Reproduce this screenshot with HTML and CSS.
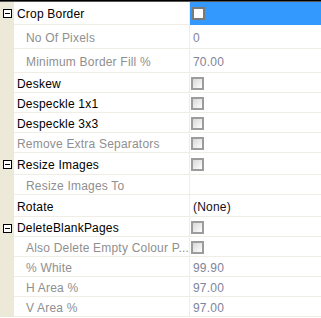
FILE: index.html
```html
<!DOCTYPE html>
<html>
<head>
<meta charset="utf-8">
<link rel="stylesheet" href="styles.css">
</head>
<body>
<div class="grid">
  <div class="row h23"><div class="gut"><span class="exp"></span></div><div class="name">Crop Border</div><div class="val selected"><span class="cb cb-sel"></span></div></div>
  <div class="row h24"><div class="gut"></div><div class="name child dim">No Of Pixels</div><div class="val num">0</div></div>
  <div class="row h24"><div class="gut"></div><div class="name child dim">Minimum Border Fill %</div><div class="val num">70.00</div></div>
  <div class="row h20"><div class="gut"></div><div class="name">Deskew</div><div class="val"><span class="cb"></span></div></div>
  <div class="row h20"><div class="gut"></div><div class="name">Despeckle 1x1</div><div class="val"><span class="cb"></span></div></div>
  <div class="row h20"><div class="gut"></div><div class="name">Despeckle 3x3</div><div class="val"><span class="cb"></span></div></div>
  <div class="row h20"><div class="gut"></div><div class="name dim">Remove Extra Separators</div><div class="val"><span class="cb"></span></div></div>
  <div class="row h22"><div class="gut"><span class="exp"></span></div><div class="name">Resize Images</div><div class="val"><span class="cb"></span></div></div>
  <div class="row h20"><div class="gut"></div><div class="name child dim">Resize Images To</div><div class="val"></div></div>
  <div class="row h22"><div class="gut"></div><div class="name">Rotate</div><div class="val text">(None)</div></div>
  <div class="row h20"><div class="gut"><span class="exp"></span></div><div class="name">DeleteBlankPages</div><div class="val"><span class="cb"></span></div></div>
  <div class="row h20"><div class="gut"></div><div class="name child dim">Also Delete Empty Colour P...</div><div class="val"><span class="cb"></span></div></div>
  <div class="row h20"><div class="gut"></div><div class="name child dim">% White</div><div class="val num">99.90</div></div>
  <div class="row h20"><div class="gut"></div><div class="name child dim">H Area %</div><div class="val num">97.00</div></div>
  <div class="row h20"><div class="gut"></div><div class="name child dim">V Area %</div><div class="val num">97.00</div></div>
</div>
</body>
</html>
```
FILE: styles.css
```css
html, body {
  margin: 0;
  padding: 0;
  background: #ffffff;
}
body {
  font-family: "Liberation Sans", Arial, sans-serif;
  font-size: 12px;
  letter-spacing: 0.2px;
  color: #000;
}
.grid {
  width: 321px;
  height: 318px;
  border-top: 1px solid #000;
  box-shadow: inset 0 1px 0 #555;
  padding-top: 1px;
  box-sizing: border-box;
  display: flex;
  flex-direction: column;
  overflow: hidden;
}
.row {
  display: flex;
  flex: none;
}
.h20 { height: 20px; }
.h22 { height: 22px; }
.h23 { height: 23px; }
.h24 { height: 24px; }
.gut {
  width: 14px;
  flex: none;
  background: #ece9d8;
  position: relative;
}
.exp {
  position: absolute;
  left: 3px;
  top: 7px;
  width: 7px;
  height: 7px;
  border: 1px solid #000;
  background: #fff;
}
.exp::after {
  content: "";
  position: absolute;
  left: 1px;
  top: 3px;
  width: 5px;
  height: 1px;
  background: #000;
}
.name {
  width: 176px;
  flex: none;
  border-right: 1px solid #efede4;
  border-bottom: 1px solid #efede4;
  padding-left: 3px;
  box-sizing: border-box;
  display: flex;
  align-items: center;
  padding-top: 2px;
  white-space: nowrap;
  overflow: hidden;
}
.name.child { padding-left: 12px; }
.name.dim { color: #8f8f8f; }
.val {
  flex: 1;
  border-bottom: 1px solid #efede4;
  display: flex;
  align-items: center;
  padding-left: 3px;
  padding-top: 2px;
  box-sizing: border-box;
  white-space: nowrap;
}
.val.num { color: #80849a; }
.val.text { color: #10101e; }
.val.selected {
  background: #3399ff;
  border-bottom-color: #3399ff;
}
.cb {
  width: 13px;
  height: 13px;
  box-sizing: border-box;
  border: 2px solid #9c9c9c;
  background: linear-gradient(135deg, #d8d8d8 0%, #f2f2f2 70%, #ffffff 100%);
  margin-left: -2px;
  margin-top: -1px;
}
.cb.cb-sel {
  border: 2px solid #7a7a7a;
  background: #fff;
  margin-left: -1px;
}
```
